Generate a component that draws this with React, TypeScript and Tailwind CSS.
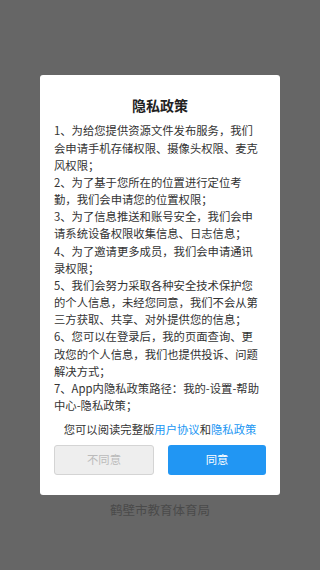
import React from "react";

const items = [
  "1、为给您提供资源文件发布服务，我们会申请手机存储权限、摄像头权限、麦克风权限；",
  "2、为了基于您所在的位置进行定位考勤，我们会申请您的位置权限；",
  "3、为了信息推送和账号安全，我们会申请系统设备权限收集信息、日志信息；",
  "4、为了邀请更多成员，我们会申请通讯录权限；",
  "5、我们会努力采取各种安全技术保护您的个人信息，未经您同意，我们不会从第三方获取、共享、对外提供您的信息；",
  "6、您可以在登录后，我的页面查询、更改您的个人信息，我们也提供投诉、问题解决方式；",
  "7、App内隐私政策路径：我的-设置-帮助中心-隐私政策；",
];

export default function App() {
  return (
    <div
      className="w-[320px] h-[570px] bg-[#666666] flex flex-col items-center pt-[75px]"
      style={{ fontFamily: '"Noto Sans CJK SC", "Noto Sans", sans-serif' }}
    >
      <div className="w-[240px] bg-white rounded-[3px] px-[14px] pt-[20px] pb-[20px] flex flex-col">
        <div className="text-[14px] leading-[20px] font-bold text-[#222222] text-center">
          隐私政策
        </div>
        <div className="mt-[7.4px] pr-[4px] text-[11.33px] leading-[17.17px] text-[#333333]">
          {items.map((t) => (
            <p key={t}>{t}</p>
          ))}
        </div>
        <div className="mt-[7px] text-[11.33px] leading-[17.17px] text-[#333333] text-center whitespace-nowrap -mx-[10px]">
          您可以阅读完整版<span className="text-[#2196f3]">用户协议</span>和
          <span className="text-[#2196f3]">隐私政策</span>
        </div>
        <div className="mt-[6.3px] flex gap-[14px]">
          <button className="flex-1 h-[30px] rounded-[3px] bg-[#eeeeee] border border-[#d4d4d4] text-[#bbbbbb] text-[11.33px]">
            不同意
          </button>
          <button className="flex-1 h-[30px] rounded-[3px] bg-[#2196f3] text-white text-[11.33px]">
            同意
          </button>
        </div>
      </div>
      <div className="mt-[6px] text-[12.5px] leading-[18px] text-[#4a4a4a]">鹤壁市教育体育局</div>
    </div>
  );
}
